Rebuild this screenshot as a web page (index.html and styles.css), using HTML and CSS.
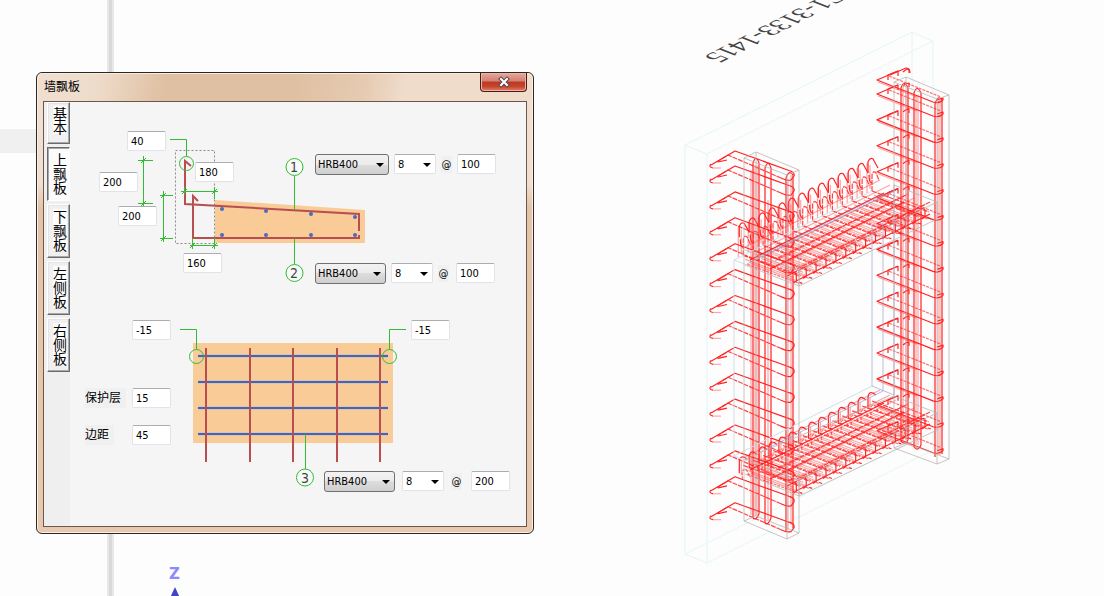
FILE: index.html
```html
<!DOCTYPE html>
<html lang="zh-CN">
<head>
  <meta charset="UTF-8">
  <title>墙飘板</title>
  <link rel="stylesheet" href="styles.css">
</head>
<body>

<div class="desktop">
  <svg class="scene" viewBox="0 0 1104 596" preserveAspectRatio="xMinYMin meet">
    <defs>
      <!-- stirrup of the left column, origin at the bend -->
      <g id="stirrupLeft">
        <path d="M-24 14L0 0L54 19.500Q60 21 59 25L56 29Q52 30 46 27" />
        <path class="long-dash" d="M-18 11L-7 4L46 27" />
        <path d="M-24 13q-3 3 2 4M-17 11l9-2" />
        <path class="soft" d="M-22 17h8" />
      </g>
      <!-- stirrup of the right column, origin at the left tip -->
      <g id="stirrupRight">
        <path d="M21-9L0 0L56 22Q62 24 66 20V18L60 20" />
        <path d="M1 2L40 17" class="soft" />
        <path class="dash" d="M12-4L64 17" />
        <path d="M11 0v-5L21-9v5M26-8q3-3 6-3v4" />
      </g>
      <g id="hookTall">
        <path d="M-3 14V3Q-1-2 2 0L7 9" />
        <path class="soft" d="M-4 34V4M-1 30V6" />
        <path class="long-dash" d="M1 32V16Q2 11 5 14l3 7" />
        <path d="M-2 16q0 8 3 8" />
      </g>
      <g id="hookShort">
        <path d="M-3 16V4Q-2-2 2 0l3 2" />
        <path class="soft" d="M-1 18V4" />
        <path class="dash" d="M0 22v-8q2-4 5 0l3 6" />
      </g>
      <!-- cross bar of a slab -->
      <g id="rib">
        <path class="long-dash" d="M0 0L57 21" />
        <path class="dash" d="M4 9L56 28" />
        <path class="soft" d="M8 8L52 25M2 4L50 22" />
        <path d="M49 18q4-2 4 2v6l-3 2M56 27l3 1" />
      </g>
      <g id="slabBars">
        <path d="M796 281L930 214M770 269L904 202M750 260L884 193" />
        <path class="long-dash" d="M787 276L920 210M797 269L930 202M778 258L906 195" />
        <path class="soft" d="M792 270L925 204M781 265L914 198M775 261L908 194M762 257L896 190M756 252L890 185M745 247L880 180" />
      </g>
    </defs>

    <rect class="pane-edge" x="107" y="0" width="7" height="596" />
    <rect class="pane-line" x="109" y="0" width="3" height="596" />
    <rect class="pane-band" x="0" y="129" width="37" height="24" />

    <text class="axis-name" x="169" y="579">Z</text>
    <path class="axis-arrow" d="M175 587L180 598H170z" />

    <text class="mark" text-anchor="end" transform="matrix(-.86 .44 -.95 -.38 703 57)">C1-3133-1415</text>

    <!-- wall -->
    <path class="wall" d="M685 145L912 32L933 41L707 154zM685 145V554L707 563V154M912 32V441L685 554M933 41V450L707 563" />

    <g class="rebar" id="rebar">
      <use href="#slabBars" />
      <use href="#slabBars" y="210" />
      <use href="#stirrupLeft" x="735" y="151" />
      <use href="#stirrupRight" x="877" y="80" />
      <path d="M890 75L906 68q4 0 4 5" />
    </g>

    <!-- vertical bars -->
    <g class="rebar">
      <path d="M753 518V163q3-9 6 0V514M765 523V168q3-9 6 0V518M786 532V178q3-9 7-3V528M753 518q3 3 6-4M765 523q3 3 6-5" />
      <path class="soft" d="M751 515V170M755 516V165M757 515V165M768 520V200M788 530V180M791 175v350" />
      <path d="M901 441V88q3-9 7 0V440M914 447V93q3-9 7 0V445M935 457V104q3-10 7-4V454M901 441q4 5 7-1M914 447q4 5 7-2" />
      <path class="soft" d="M903 440V86M906 440V90M916 445V95M918 445V95M938 455V100M940 455V100" />
    </g>

    <!-- opening -->
    <path class="opening-back" d="M734 260V456L872 386M734 260L747 265M734 260L872 191M734 456L747 461" />
    <path class="opening" d="M872 225V386L894 395M883 220V391M894 185V395M747 264L894 191M756 258L884 194M883 391L760 452" />

    <!-- concrete of columns and slabs -->
    <path class="concrete" d="M744 158L756 152L799 170L787 175zM744 158V521L787 539V175M799 170V533L787 539M756 152V516L744 521M756 516L799 533" />
    <path class="concrete" d="M894 82L906 77L949 95L937 99zM894 82V448L937 464V99M949 95V459L937 464M906 77V443L894 448M906 443L949 459" />
    <path class="concrete" d="M745 265L799 286L937 219V202L799 271V286M894 185L937 202M745 250L799 271" />
    <path class="concrete" d="M745 474L799 496L937 430V413L799 480V496M894 396L937 413M745 459L799 480M745 459L894 396" />
  </svg>

  <div class="dialog" role="dialog" aria-labelledby="dialogTitle">
    <div class="titlebar">
      <h1 id="dialogTitle">墙飘板</h1>
      <button class="close" type="button" aria-label="关闭">
        <svg width="14" height="12" viewBox="0 0 14 12">
          <path class="close-edge" d="M4 3L10 9M10 3L4 9" />
          <path class="close-fill" d="M4 3L10 9M10 3L4 9" />
        </svg>
      </button>
    </div>

    <div class="client">
      <div class="tabs" role="tablist">
        <button class="tab" type="button" role="tab"><span>基本</span></button>
        <button class="tab active" type="button" role="tab" aria-selected="true"><span>上飘板</span></button>
        <button class="tab" type="button" role="tab"><span>下飘板</span></button>
        <button class="tab" type="button" role="tab"><span>左侧板</span></button>
        <button class="tab" type="button" role="tab"><span>右侧板</span></button>
      </div>

      <div class="panel">
        <svg class="diagram" width="456" height="424" viewBox="70 102 456 424">
          <!-- section -->
          <path class="slab" d="M215 200L365 210V243H215z" />
          <rect class="hidden-wall" x="175.500" y="150.500" width="39" height="93" />
          <path class="bar" d="M191 166L185 161V204L359 214V231" />
          <path class="bar" d="M198 201L193 196V238H359V235" />
          <g class="dot">
            <circle cx="222" cy="209" r="2" /><circle cx="266" cy="211" r="2" />
            <circle cx="311" cy="214" r="2" /><circle cx="355" cy="217" r="2" />
            <circle cx="222" cy="235" r="2" /><circle cx="266" cy="235" r="2" />
            <circle cx="311" cy="235" r="2" /><circle cx="355" cy="235" r="2" />
          </g>
          <g class="dim">
            <path d="M143.500 156V207M138 160.500H153M138 203.500H153M141 163l5-5M141 206l5-5" />
            <path d="M163.500 191V242M160 195.500H173M160 238.500H173M161 198l5-5M161 241l5-5" />
            <path d="M181 191.500H218M184.500 187V195M214.500 187V199M182 194l5-5M212 194l5-5" />
            <path d="M190 245.500H218M192.500 238V249M214.500 237V249M190 248l5-5M212 248l5-5" />
            <path d="M170 139.500H186.500V156M294.500 176V210M294.500 238V264" />
            <circle cx="186.500" cy="163.500" r="7" />
            <circle class="balloon" cx="294.500" cy="167" r="8.500" />
            <circle class="balloon" cx="294.500" cy="273" r="8.500" />
          </g>
          <text class="balloon-no" x="294" y="172">1</text>
          <text class="balloon-no" x="294" y="278">2</text>

          <!-- plan -->
          <rect class="slab" x="193" y="343" width="200" height="100" />
          <path class="mesh-halo" d="M198 356H388M198 382H388M198 408H388M198 434H388" />
          <path class="mesh" d="M198 356H388M198 382H388M198 408H388M198 434H388" />
          <path class="bar" d="M206 348V462M250 348V462M293 348V462M337 348V462M380 348V462" />
          <g class="dim">
            <path d="M180 329.500H196.500V349M406 329.500H389.500V349M305.500 434V469" />
            <circle cx="196.500" cy="356.500" r="7" />
            <circle cx="389.500" cy="356.500" r="7" />
            <circle class="balloon" cx="305" cy="477.500" r="8.500" />
          </g>
          <text class="balloon-no" x="305" y="483">3</text>
        </svg>

        <input class="field at-hook" type="text" value="40" aria-label="弯钩长度">
        <input class="field at-rise-outer" type="text" value="200" aria-label="外侧高度">
        <input class="field at-rise-inner" type="text" value="200" aria-label="内侧高度">
        <input class="field at-anchor-top" type="text" value="180" aria-label="上部锚固">
        <input class="field at-anchor-bottom" type="text" value="160" aria-label="下部锚固">
        <input class="field at-edge-left" type="text" value="-15" aria-label="左端距离">
        <input class="field at-edge-right" type="text" value="-15" aria-label="右端距离">

        <div class="spec spec-top">
          <span class="drop grade wide"><select aria-label="1号钢筋级别"><option>HRB400</option></select></span>
          <span class="drop size"><select aria-label="1号钢筋直径"><option>8</option></select></span>
          <label for="pitch1">@</label>
          <input class="field" id="pitch1" type="text" value="100">
        </div>
        <div class="spec spec-bottom">
          <span class="drop grade"><select aria-label="2号钢筋级别"><option>HRB400</option></select></span>
          <span class="drop size"><select aria-label="2号钢筋直径"><option>8</option></select></span>
          <label for="pitch2">@</label>
          <input class="field" id="pitch2" type="text" value="100">
        </div>
        <div class="spec spec-mesh">
          <span class="drop grade"><select aria-label="3号钢筋级别"><option>HRB400</option></select></span>
          <span class="drop size"><select aria-label="3号钢筋直径"><option>8</option></select></span>
          <label for="pitch3">@</label>
          <input class="field" id="pitch3" type="text" value="200">
        </div>

        <div class="cover">
          <label for="cover">保护层</label>
          <input class="field" id="cover" type="text" value="15">
          <label for="margin">边距</label>
          <input class="field" id="margin" type="text" value="45">
        </div>
      </div>
    </div>
  </div>
</div>

<script>
  const rebar = document.getElementById('rebar');

  // repeat a shape n times, stepping by (dx, dy)
  function repeat(id, n, x, y, dx, dy) {
    for (let i = 0; i < n; i++) {
      const use = document.createElementNS('http://www.w3.org/2000/svg', 'use');
      use.setAttribute('href', '#' + id);
      use.setAttribute('x', x + dx * i);
      use.setAttribute('y', y + dy * i);
      rebar.appendChild(use);
    }
  }

  repeat('stirrupLeft', 14, 735, 166, 0, 25.9);
  repeat('stirrupRight', 14, 877, 94, 0, 25.9);
  repeat('rib', 14, 872, 191, -9.9, 4.95);
  repeat('rib', 14, 872, 401, -9.9, 4.95);
  repeat('hookTall', 14, 871, 159, -9.9, 4.95);
  repeat('hookShort', 14, 871, 393, -9.9, 4.95);
</script>

</body>
</html>
```
FILE: styles.css
```css
body {
  margin: 0;
  background: #fdfdfd;
  font-family: "DejaVu Sans Condensed", Tahoma, "Noto Sans CJK SC", sans-serif;
  font-size: 11px;
  color: #000;
}

.desktop {
  position: relative;
  height: 100vh;
  overflow: hidden;
}

/* 3D view */
.scene {
  display: block;
  width: 100%;
  height: 100%;
}

.scene path { fill: none; }
.pane-edge { fill: #e8e8e8; }
.pane-line { fill: #d9d9d9; }
.pane-band { fill: #f0f0f0; }

.axis-name {
  font: bold 15px "DejaVu Sans", sans-serif;
  fill: #8c88ff;
}

.scene .axis-arrow { fill: #4644c0; }

.mark {
  font: 26px "Liberation Serif", serif;
  fill: #444;
}

.wall { stroke: #e2f6f5; }
.opening { stroke: #9aa2d0; opacity: 0.7; }
.opening-back { stroke: #cfdfe6; }
.concrete { stroke: #b8b0b0; opacity: 0.75; }

.rebar {
  stroke: #ff2424;
  stroke-width: 1.2;
  stroke-linejoin: round;
}

.rebar .soft,
.soft { opacity: 0.4; }
.dash { stroke-dasharray: 3 1; opacity: 0.65; }
.long-dash { stroke-dasharray: 5 1; opacity: 0.85; }

/* window */
.dialog {
  position: absolute;
  left: 36px;
  top: 72px;
  box-sizing: border-box;
  width: 498px;
  padding: 0 6px 6px;
  border: 1px solid #2e2622;
  border-radius: 6px;
  background: linear-gradient(#f0dfd0 0, #f0dfd0 110px, #e3c4a8 135px, #e6c9b0 100%);
  box-shadow: inset 0 0 0 1px #faf0e8;
}

.titlebar {
  display: flex;
  justify-content: space-between;
  align-items: flex-start;
  height: 28px;
  margin: 0 -5px;
  padding: 0 5px 0 6px;
  border-radius: 5px 5px 0 0;
  background: linear-gradient(100deg, #f0dfd0 0, #eedccb 12%, #dfc0a2 26%, #dfc0a2 52%, #e6cbb2 66%, #efdccb 74%, #efdccb 100%);
  box-shadow: inset 0 1px 0 #f8ebdf;
}

.titlebar h1 {
  margin: 0;
  font-size: 12px;
  font-weight: normal;
  line-height: 28px;
}

.close {
  display: flex;
  justify-content: center;
  align-items: center;
  width: 47px;
  height: 19px;
  padding: 0;
  border: 1px solid #4c1a14;
  border-top: 0;
  border-radius: 0 0 4px 4px;
  background: linear-gradient(#e5a99c 0, #d27f70 45%, #b83a25 50%, #c9442c 75%, #e08468 100%);
  box-shadow: inset 0 0 0 1px #eab5a8;
}

.close path { fill: none; stroke-linecap: square; }
.close-edge { stroke: #5a4550; stroke-width: 4; }
.close-fill { stroke: #fff; stroke-width: 2; }

.client {
  display: flex;
  border: 1px solid #6a584c;
  background: #f5f5f5;
}

/* tabs */
.tabs {
  display: flex;
  flex-direction: column;
  gap: 3px;
  width: 26px;
  background: #efefef;
}

.tab {
  display: flex;
  justify-content: center;
  align-items: center;
  box-sizing: border-box;
  width: 23px;
  margin-left: 3px;
  padding: 4px 2px 6px 5px;
  border: 1px solid;
  border-color: #fff #6b6b6b #6b6b6b #fff;
  box-shadow: inset -1px -1px 0 #a8a8a8, inset 1px 1px 0 #e4e4e4;
  background: #f0f0f0;
  font-family: "Noto Sans CJK SC", sans-serif;
  font-size: 14px;
  line-height: 14px;
  color: #000;
}

.tab span {
  width: 14px;
  background: #fdfdfd;
}

.tab:first-child { padding: 3px 2px 9px 5px; }
.tab:not(:first-child) { min-height: 54px; }

.tab.active {
  border-color: #6b6b6b #fff #fff #6b6b6b;
  box-shadow: inset 1px 1px 0 #a8a8a8;
  background: #fbfbfb;
}

/* diagram with its fields */
.panel {
  position: relative;
  flex: 1;
}

.diagram { display: block; }
.slab { fill: #f9cb96; }
.hidden-wall { fill: none; stroke: #8a8a8a; stroke-dasharray: 2 2; }
.bar { fill: none; stroke: #b94e50; stroke-width: 2; }
.mesh { stroke: #5062a6; stroke-width: 2; }
.mesh-halo { stroke: #d3c6c0; stroke-width: 4; }
.dot { fill: #4a6ac4; }
.dim { fill: none; stroke: #33bb33; }
.balloon { fill: #f8fcf8; }

.balloon-no {
  font: 14px "DejaVu Sans Condensed", sans-serif;
  text-anchor: middle;
  fill: #444;
}

.field {
  box-sizing: border-box;
  width: 39px;
  height: 20px;
  padding: 0 3px;
  border: 1px solid #e2e3ea;
  border-top-color: #abadb3;
  border-radius: 2px;
  background: #fff;
  font: inherit;
  color: #000;
}

.panel > .field,
.spec,
.cover { position: absolute; }

.at-hook { left: 57px; top: 29px; }
.at-rise-outer { left: 29px; top: 70px; }
.at-rise-inner { left: 48px; top: 104px; }
.at-anchor-top { left: 125px; top: 60px; }
.at-anchor-bottom { left: 113px; top: 151px; }
.at-edge-left { left: 62px; top: 218px; }
.at-edge-right { left: 341px; top: 218px; }

.spec {
  display: flex;
  align-items: flex-start;
  gap: 5px;
}

.spec-top { left: 245px; top: 52px; }
.spec-bottom { left: 245px; top: 161px; }
.spec-mesh { left: 254px; top: 369px; gap: 7px; }

.spec label {
  width: 11px;
  line-height: 17px;
  margin-top: 2px;
  background: #f0f0f0;
  text-align: center;
}

.spec-bottom label,
.spec-mesh label { margin-right: 2px; }

.drop {
  position: relative;
  display: flex;
}

.drop select {
  appearance: none;
  box-sizing: border-box;
  width: 42px;
  height: 20px;
  padding: 0 3px;
  border: 1px solid #e2e3ea;
  border-top-color: #abadb3;
  border-radius: 2px;
  background: #fff;
  font: inherit;
  color: #000;
}

.drop.grade select {
  width: 71px;
  height: 21px;
  padding: 0 2px;
  border-color: #707070;
  border-radius: 3px;
  background: linear-gradient(#f2f2f2 0, #ebebeb 50%, #dddddd 50%, #cfcfcf 100%);
}

.drop.wide select { width: 74px; }

.drop::after {
  content: "";
  position: absolute;
  right: 5px;
  top: 9px;
  border: 4px solid transparent;
  border-top-color: #000;
  border-bottom: 0;
  pointer-events: none;
}

.cover {
  left: 15px;
  top: 286px;
  display: grid;
  grid-template-columns: 47px 39px;
  row-gap: 17px;
  align-items: center;
}

.cover label {
  justify-self: start;
  padding-right: 5px;
  background: #f0f0f0;
  font-size: 12px;
  line-height: 20px;
}
```
